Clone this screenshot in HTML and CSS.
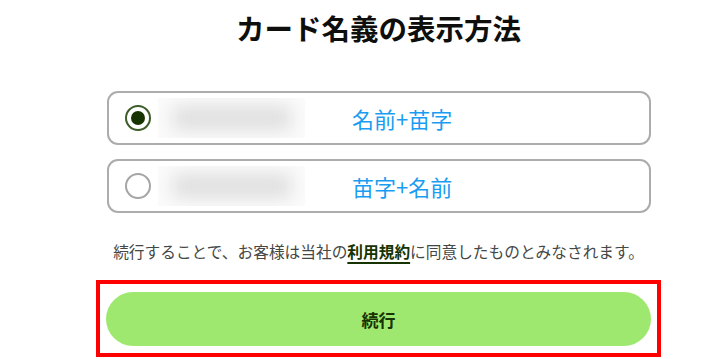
FILE: index.html
```html
<!DOCTYPE html>
<html lang="ja">
<head>
    <meta charset="utf-8">
    <link rel="stylesheet" href="styles.css">
    <title>カード名義の表示方法</title>
</head>
<body>
    <div class="page">
        <h1 class="title">カード名義の表示方法</h1>

        <div class="options">
            <label class="option">
                <span class="radio checked"></span>
                <span class="masked"><span class="masked-blob"></span></span>
                <span class="option-label">名前+苗字</span>
            </label>
            <label class="option">
                <span class="radio"></span>
                <span class="masked"><span class="masked-blob"></span></span>
                <span class="option-label">苗字+名前</span>
            </label>
        </div>

        <p class="terms">続行することで、お客様は当社の<a class="terms-link" href="#">利用規約</a>に同意したものとみなされます。</p>

        <div class="highlight">
            <button class="continue-button">続行</button>
        </div>
    </div>
</body>
</html>
```

FILE: styles.css
```css
body {
    margin: 0;
    background-color: #fff;
    font-family: "Noto Sans CJK JP", "Noto Sans", sans-serif;
    color: #0e0f0c;
}

.page {
    width: 565px;
    margin-left: 96px;
}

.title {
    margin: 0;
    padding-top: 8px;
    font-size: 28.5px;
    line-height: 40px;
    font-weight: 700;
    text-align: center;
}

.options {
    display: flex;
    flex-direction: column;
    gap: 14px;
    margin: 43px 10px 0 11px;
}

.option {
    display: flex;
    align-items: center;
    height: 54px;
    box-sizing: border-box;
    border: 2px solid #acacac;
    border-radius: 11px;
    padding-left: 16px;
    cursor: pointer;
}

.radio {
    width: 26px;
    height: 26px;
    box-sizing: border-box;
    border: 2px solid #a5a5a5;
    border-radius: 50%;
    display: flex;
    align-items: center;
    justify-content: center;
    flex-shrink: 0;
}

.radio.checked {
    border-color: #3c5c28;
}

.radio.checked::after {
    content: "";
    width: 14px;
    height: 14px;
    border-radius: 50%;
    background-color: #163300;
}

.masked {
    width: 147px;
    height: 40px;
    margin-left: 7px;
    background-color: #fbfbfb;
    display: flex;
    align-items: center;
    justify-content: center;
    overflow: hidden;
}

.masked-blob {
    width: 118px;
    height: 24px;
    background-color: #dedede;
    filter: blur(9px);
}

.option-label {
    margin-left: 47px;
    font-size: 22px;
    color: #1a9cf0;
}

.terms {
    margin: 27px 0 0;
    font-size: 15.7px;
    line-height: 24px;
    color: #454745;
    text-align: center;
}

.terms-link {
    color: #163300;
    font-weight: 700;
    text-decoration: underline;
    text-decoration-thickness: 2px;
    text-underline-offset: 4px;
}

.highlight {
    margin-top: 16px;
    border: 4px solid #ff0000;
    padding: 8px 6px 7px;
}

.continue-button {
    display: block;
    width: 100%;
    height: 54px;
    border: none;
    border-radius: 27px;
    background-color: #9fe870;
    color: #163300;
    font-family: inherit;
    font-size: 17px;
    font-weight: 700;
    cursor: pointer;
}
```
